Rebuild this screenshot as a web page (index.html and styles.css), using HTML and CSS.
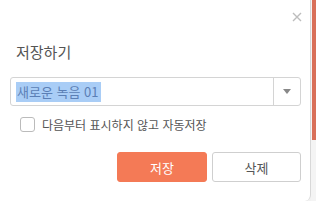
FILE: index.html
```html
<!DOCTYPE html>
<html lang="ko">
<head>
    <meta charset="UTF-8">
    <title>저장하기</title>
    <link rel="stylesheet" href="styles.css">
</head>
<body>
    <div class="page">
        <div class="dialog">
            <button class="close-btn" aria-label="닫기">
                <svg width="10" height="10" viewBox="0 0 10 10"><path d="M1 1L9 9M9 1L1 9" stroke="#bdbdbd" stroke-width="1.4" fill="none"/></svg>
            </button>
            <h2 class="title">저장하기</h2>
            <div class="name-select">
                <div class="name-field"><span class="selected">새로운 녹음 01</span></div>
                <div class="drop-btn">
                    <svg width="8" height="5" viewBox="0 0 8 5"><path d="M0 0H8L4 5Z" fill="#888"/></svg>
                </div>
            </div>
            <label class="auto-save">
                <span class="check"></span>
                다음부터 표시하지 않고 자동저장
            </label>
            <div class="actions">
                <button class="btn btn-save">저장</button>
                <button class="btn btn-delete">삭제</button>
            </div>
        </div>
        <div class="side"><div class="side-top"></div></div>
    </div>
</body>
</html>
```

FILE: styles.css
```css
* {
    margin: 0;
    padding: 0;
    box-sizing: border-box;
}

body {
    font-family: 'Noto Sans CJK KR', 'Noto Sans', sans-serif;
    background: #f2f2f2;
    color: #555;
    width: 316px;
    height: 201px;
    overflow: hidden;
}

.page {
    display: flex;
    height: 201px;
}

.dialog {
    position: relative;
    width: 311px;
    height: 201px;
    background: #fff;
    border-right: 1px solid #d8d8d8;
    border-radius: 0 0 6px 0;
    padding: 43px 10px 0 10px;
}

.close-btn {
    position: absolute;
    top: 11px;
    right: 7px;
    width: 12px;
    height: 12px;
    border: none;
    background: none;
    display: flex;
    align-items: center;
    justify-content: center;
}

.title {
    font-size: 15px;
    font-weight: normal;
    color: #555;
    line-height: 18px;
    padding-left: 6px;
    margin-bottom: 16px;
}

.name-select {
    display: flex;
    height: 29px;
    border: 1px solid #d4d4d4;
    border-radius: 3px;
    width: 291px;
}

.name-field {
    flex: 1;
    display: flex;
    align-items: center;
    padding-left: 5px;
}

.selected {
    background: #a9cdf6;
    color: #5b7fb5;
    font-size: 13px;
    line-height: 20px;
    padding: 0 2px 0 1px;
}

.drop-btn {
    width: 27px;
    border-left: 1px solid #d4d4d4;
    display: flex;
    align-items: center;
    justify-content: center;
}

.auto-save {
    display: flex;
    align-items: center;
    gap: 7px;
    font-size: 12px;
    color: #555;
    margin: 11px 0 0 10px;
    height: 15px;
}

.check {
    width: 15px;
    height: 15px;
    border: 1px solid #bbb;
    border-radius: 3px;
    background: #fff;
}

.actions {
    display: flex;
    justify-content: flex-end;
    gap: 5px;
    margin-top: 20px;
    width: 291px;
}

.btn {
    width: 90px;
    height: 30px;
    border-radius: 3px;
    font-family: inherit;
    font-size: 13px;
    cursor: pointer;
}

.btn-save {
    background: #f47a56;
    border: 1px solid #f47a56;
    color: #fff;
}

.btn-delete {
    background: #fff;
    border: 1px solid #cfcfcf;
    color: #555;
    width: 89px;
}

.side {
    flex: 1;
    background: #f4f4f4;
}

.side-top {
    height: 140px;
    background: #d9705a;
    margin-left: 1px;
}
```
